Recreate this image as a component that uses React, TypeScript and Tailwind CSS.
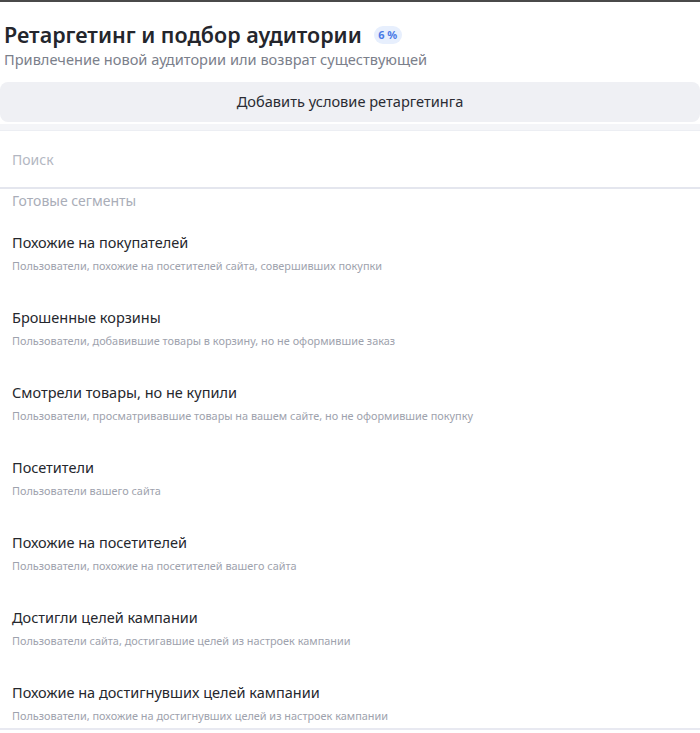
import React from 'react';

const segments = [
  { title: 'Похожие на покупателей', desc: 'Пользователи, похожие на посетителей сайта, совершивших покупки' },
  { title: 'Брошенные корзины', desc: 'Пользователи, добавившие товары в корзину, но не оформившие заказ' },
  { title: 'Смотрели товары, но не купили', desc: 'Пользователи, просматривавшие товары на вашем сайте, но не оформившие покупку' },
  { title: 'Посетители', desc: 'Пользователи вашего сайта' },
  { title: 'Похожие на посетителей', desc: 'Пользователи, похожие на посетителей вашего сайта' },
  { title: 'Достигли целей кампании', desc: 'Пользователи сайта, достигавшие целей из настроек кампании' },
  { title: 'Похожие на достигнувших целей кампании', desc: 'Пользователи, похожие на достигнувших целей из настроек кампании' },
];

export default function App() {
  return (
    <div className="w-[700px] h-[733px] bg-white overflow-hidden font-['Noto_Sans',sans-serif]">
      {/* top edge */}
      <div className="h-[3px] border-t-2 border-[#4a4a4a]" />

      {/* Header */}
      <div className="px-1 pt-[19px]">
        <div className="flex items-center gap-[12px]">
          <h1 className="text-[21.5px] leading-[26px] font-semibold text-[#24262c]">
            Ретаргетинг и подбор аудитории
          </h1>
          <span className="w-[28px] h-[18px] flex items-center justify-center rounded-full bg-[#e7effd] text-[11px] font-bold text-[#4b7be6]">
            6 %
          </span>
        </div>
        <p className="text-[14.6px] leading-[18px] text-[#7b808b] mt-[2px]">
          Привлечение новой аудитории или возврат существующей
        </p>
      </div>

      {/* Add button */}
      <button className="mt-[14px] w-full h-[40px] rounded-lg bg-[#eff0f4] text-[14.6px] text-[#2a2c33]">
        Добавить условие ретаргетинга
      </button>

      {/* Search */}
      <div className="mt-[2px] h-[6px] bg-[#f4f5f8]" />
      <div className="border-t border-[#eceef3] border-b-2 border-b-[#e4e6ee] h-[59px] flex items-center px-3">
        <span className="text-[14px] text-[#b3b7c2]">Поиск</span>
      </div>

      {/* Segments */}
      <div className="px-3 pt-[2px]">
        <div className="text-[14px] leading-[20px] text-[#a9adb8]">Готовые сегменты</div>
        <div className="flex flex-col gap-[34px] pt-[21px]">
          {segments.map((s) => (
            <div key={s.title} className="h-[41px]">
              <div className="text-[14.5px] leading-[20px] text-[#25272d]">{s.title}</div>
              <div className="mt-[6px] text-[10.9px] leading-[15px] text-[#9ea2ad]">{s.desc}</div>
            </div>
          ))}
        </div>
      </div>
      <div className="mt-[5px] border-t-2 border-[#e8e9f1]" />
    </div>
  );
}
